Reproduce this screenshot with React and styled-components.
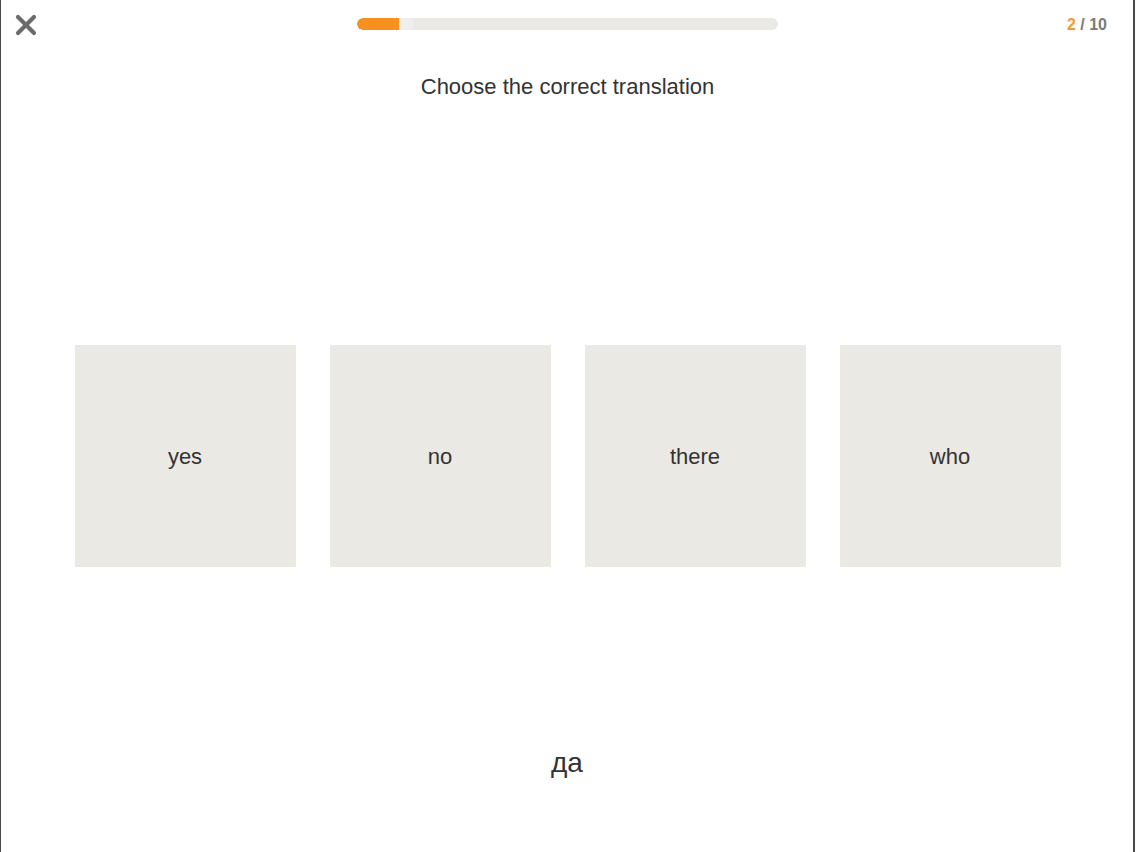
import styled, { createGlobalStyle } from 'styled-components';

const GlobalStyle = createGlobalStyle`
  html, body {
    margin: 0;
    padding: 0;
    background: #fff;
  }
  body {
    font-family: "Liberation Sans", Arial, sans-serif;
  }
`;

const options = ['yes', 'no', 'there', 'who'];

const App = () => {
  const current = 2;
  const total = 10;

  return (
    <Screen>
      <GlobalStyle />
      <TopBar>
        <CloseButton aria-label="close">
          <svg width="22" height="22" viewBox="0 0 22 22">
            <path
              d="M3 3 L19 19 M19 3 L3 19"
              stroke="#6b6b6b"
              strokeWidth="4.2"
              strokeLinecap="round"
            />
          </svg>
        </CloseButton>
        <ProgressTrack>
          <ProgressFill style={{ width: `${(current / total) * 100 * 0.5}%` }} />
          <ProgressGhost />
        </ProgressTrack>
        <Counter>
          <CounterCurrent>{current}</CounterCurrent> / {total}
        </Counter>
      </TopBar>

      <Prompt>Choose the correct translation</Prompt>

      <Options>
        {options.map((item) => (
          <OptionCard key={item}>{item}</OptionCard>
        ))}
      </Options>

      <Word>да</Word>
    </Screen>
  );
};

export default App;

const Screen = styled.div`
  width: 1132px;
  height: 852px;
  border-left: 1px solid #4a4a4a;
  border-right: 2px solid #4a4a4a;
  display: flex;
  flex-direction: column;
  align-items: center;
  box-sizing: content-box;
  overflow: hidden;
`;

const TopBar = styled.div`
  width: 100%;
  height: 48px;
  display: grid;
  grid-template-columns: 1fr 421px 1fr;
  align-items: center;
  padding: 0 13px 0 14px;
  box-sizing: border-box;
`;

const CloseButton = styled.div`
  width: 22px;
  height: 22px;
  display: flex;
  justify-self: start;
  margin-top: 1px;
`;

const ProgressTrack = styled.div`
  width: 421px;
  height: 12px;
  border-radius: 6px;
  background: #ebe9e5;
  overflow: hidden;
  display: flex;
`;

const ProgressFill = styled.div`
  height: 100%;
  flex: none;
  background: #f7901e;
  border-radius: 6px 0 0 6px;
`;

const ProgressGhost = styled.div`
  width: 15px;
  height: 100%;
  background: #efeeec;
`;

const Counter = styled.div`
  justify-self: end;
  margin-right: 13px;
  font-size: 16px;
  font-weight: bold;
  color: #7a7a7a;
  margin-top: 1px;
`;

const CounterCurrent = styled.span`
  color: #f39a33;
`;

const Prompt = styled.div`
  margin-top: 26px;
  font-size: 22px;
  color: #333;
  line-height: 26px;
  margin-left: 1px;
`;

const Options = styled.div`
  margin-top: 245px;
  display: flex;
  gap: 34px;
  margin-left: 1px;
`;

const OptionCard = styled.div`
  width: 221px;
  height: 222px;
  background: #ebe9e4;
  display: flex;
  align-items: center;
  justify-content: center;
  font-size: 22px;
  color: #333;
  padding-top: 1px;
  box-sizing: border-box;
`;

const Word = styled.div`
  margin-top: 180px;
  font-size: 28px;
  color: #333;
  line-height: 32px;
`;
